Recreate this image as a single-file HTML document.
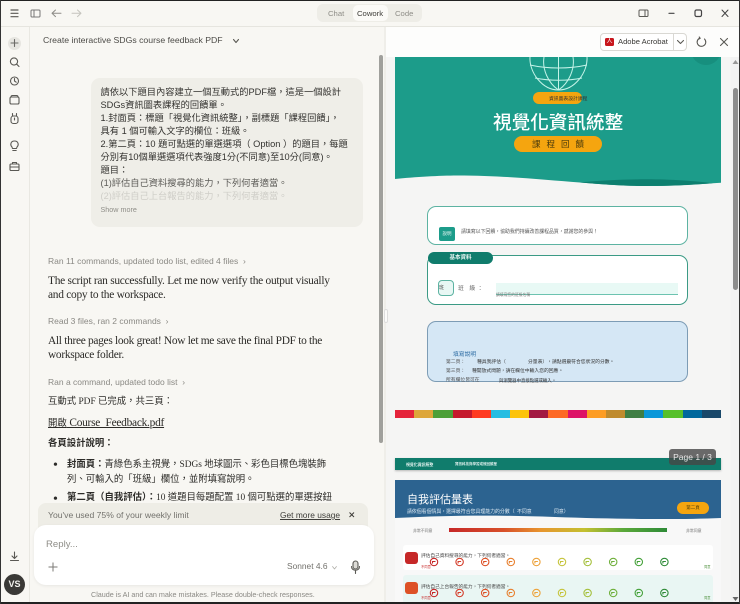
<!DOCTYPE html>
<html><head><meta charset="utf-8">
<style>
html,body{margin:0;padding:0;width:740px;height:604px;overflow:hidden;background:#f8f7f3}
*{box-sizing:border-box}
body{font-family:"Liberation Sans","Noto Sans CJK TC",sans-serif;position:relative}
#w{position:absolute;left:0;top:0;width:740px;height:604px;filter:blur(.3px)}
.a{position:absolute;white-space:nowrap}
.gr{color:#8a8984;font-size:8.500px}
.se{font-family:"Liberation Serif","Noto Sans CJK TC",serif;font-size:11.400px;letter-spacing:-.26px;color:#2c2b28;line-height:14px}
.cj{font-size:9.400px;letter-spacing:0}
svg{position:absolute;overflow:visible}
.ic{fill:none;stroke:#5a5954;stroke-width:1.100;stroke-linecap:round;stroke-linejoin:round}
.p{font-size:4.800px;color:#333;line-height:7px}
</style></head><body><div id="w">
<!-- frame -->
<div class="a" style="left:0;top:26px;width:740px;height:1px;background:#e6e5df"></div>
<div class="a" style="left:29px;top:27px;width:1px;height:577px;background:#e9e8e2"></div>
<!-- top bar icons -->
<svg style="left:0;top:0" width="130" height="27" class="ic"><path d="M11 10h7M11 13.300h7M11 16.700h7" stroke-width="1.200"/><rect x="31" y="10" width="9" height="7" rx="1" stroke="#777" stroke-width="1"/><path d="M34 10v7" stroke="#777" stroke-width="1"/><path d="M61 13.300H52M55.500 10l-3.500 3.300 3.500 3.300" stroke="#8d8c87" stroke-width="1"/><path d="M72 13.300h9M77.500 10l3.500 3.300-3.500 3.300" stroke="#c5c4be" stroke-width="1"/></svg>
<div class="a" style="left:317px;top:4px;width:105px;height:18px;background:#eeede7;border-radius:6px"></div>
<div class="a" style="left:353px;top:5px;width:35px;height:16px;background:#fbfaf7;border-radius:5px"></div>
<div class="a" style="left:328px;top:9px;font-size:7.700px;color:#8f8e88">Chat</div>
<div class="a" style="left:357px;top:9px;font-size:7.700px;color:#3d3c38">Cowork</div>
<div class="a" style="left:395px;top:9px;font-size:7.700px;color:#8f8e88">Code</div>
<svg style="left:630px;top:0" width="110" height="27" class="ic"><rect x="9" y="10" width="9" height="6.500" rx="1" stroke-width="1"/><path d="M15 10v6.500" stroke-width="1"/><path d="M39 13.300h5" stroke="#444" stroke-width="1.200"/><rect x="65" y="10" width="6.500" height="6.500" rx="1.500" stroke="#444" stroke-width="1.200"/><path d="M92 10l6 6.500M98 10l-6 6.500" stroke="#444" stroke-width="1"/></svg>
<!-- sidebar -->
<div class="a" style="left:8px;top:37px;width:13px;height:13px;background:#e6e5e0;border-radius:50%"></div>
<svg style="left:0;top:27px" width="30" height="150" class="ic"><path d="M14.500 12.500v7M11 16h7" stroke="#6b6a66"/><circle cx="14" cy="34.500" r="3.600"/><path d="M16.800 37.300l2.200 2.200"/><circle cx="14.500" cy="54" r="4"/><path d="M14.500 51.500V54l1.700 1.200"/><rect x="10" y="70" width="9" height="7" rx="1.400"/><path d="M11 70c0-1 .6-1.500 1.500-1.500h4c.9 0 1.500.5 1.500 1.500"/><rect x="11" y="89" width="7" height="7.500" rx="2.400"/><path d="M12.500 89v-2.500M16.500 89v-2.500M14.500 91v2"/><path d="M12 120c-2-2-1.500-6 2.500-6s4.500 4 2.500 6l-.5 1.500h-4zM12.800 123.500h3.400"/><rect x="10" y="137" width="9" height="6.500" rx="1"/><path d="M12.500 137v-1.500h4v1.500M10 140h9"/></svg>
<svg style="left:0;top:541px" width="30" height="30" class="ic"><path d="M14.500 11v6M12 15l2.500 2.500L17 15M10.500 19.500h8"/></svg>
<div class="a" style="left:4px;top:574px;width:21px;height:21px;background:#3a3936;border-radius:50%;color:#f3f2ee;font-size:9px;font-weight:bold;text-align:center;line-height:21px">VS</div>
<!-- title -->
<div class="a" style="left:43px;top:35px;font-size:8.700px;color:#4c4b47">Create interactive SDGs course feedback PDF</div>
<svg style="left:233px;top:39px" width="10" height="6" class="ic"><path d="M.5.500L3 3.500 5.500.500"/></svg>
<!-- bubble -->
<div class="a" style="left:91px;top:78px;width:272px;height:149px;background:#efeee8;border-radius:9px"></div>
<div class="a" style="left:100.500px;top:86px;font-size:9.250px;line-height:13px;color:#33322f">請依以下題目內容建立一個互動式的PDF檔，這是一個設計<br>SDGs資訊圖表課程的回饋單。<br>1.封面頁：標題「視覺化資訊統整」，副標題「課程回饋」，<br>具有 1 個可輸入文字的欄位：班級。<br>2.第二頁：10 題可點選的單選選項（ Option ）的題目，每題<br>分別有10個單選選項代表強度1分(不同意)至10分(同意)。<br>題目：<br><span style="color:#5d5c58">(1)評估自己資料搜尋的能力，下列何者適當。</span><br><span style="color:#cfcec8">(2)評估自己上台報告的能力，下列何者適當。</span></div>
<div class="a" style="left:100.500px;top:205px;font-size:7.200px;color:#8f8e88">Show more</div>
<!-- messages -->
<div class="a gr" style="left:48px;top:256px">Ran 11 commands, updated todo list, edited 4 files&nbsp; ›</div>
<div class="a se" style="left:48px;top:274px">The script ran successfully. Let me now verify the output visually<br>and copy to the workspace.</div>
<div class="a gr" style="left:48px;top:316px">Read 3 files, ran 2 commands&nbsp; ›</div>
<div class="a se" style="left:48px;top:334px;letter-spacing:-.3px">All three pages look great! Now let me save the final PDF to the<br>workspace folder.</div>
<div class="a gr" style="left:48px;top:377px">Ran a command, updated todo list&nbsp; ›</div>
<div class="a se cj" style="left:48px;top:395px">互動式 PDF 已完成，共三頁：</div>
<div class="a se" style="left:48px;top:416px;text-decoration:underline"><span class="cj">開啟</span> Course_Feedback.pdf</div>
<div class="a se cj" style="left:48px;top:437px;font-weight:bold">各頁設計說明：</div>
<div class="a se" style="left:53px;top:458px;line-height:15px;font-size:14px">•</div>
<div class="a se cj" style="left:67px;top:458px;line-height:15px"><b>封面頁：</b>青綠色系主視覺，SDGs 地球圖示、彩色目標色塊裝飾<br>列、可輸入的「班級」欄位，並附填寫說明。</div>
<div class="a se" style="left:53px;top:492px;line-height:15px;font-size:14px">•</div>
<div class="a se cj" style="left:67px;top:491px;line-height:15px"><b>第二頁（自我評估）：</b>10 道題目每題配置 10 個可點選的單選按鈕</div>
<!-- chat scrollbar -->
<div class="a" style="left:379px;top:55px;width:3.500px;height:388px;background:#a0a09c;border-radius:2px"></div>
<!-- limit -->
<div class="a" style="left:38px;top:503px;width:330px;height:30px;background:#eeede6;border-radius:8px 8px 0 0"></div>
<div class="a" style="left:48px;top:510px;font-size:8.600px;color:#73726d">You've used 75% of your weekly limit</div>
<div class="a" style="left:280px;top:510px;font-size:8.400px;color:#3e3d39;text-decoration:underline">Get more usage</div>
<svg style="left:349px;top:512px" width="6" height="6"><path d="M.5.500l4.500 4.500M5 .500L.5 5" stroke="#3e3d39" fill="none"/></svg>
<!-- input -->
<div class="a" style="left:34px;top:525px;width:340px;height:60px;background:#fff;border-radius:12px;box-shadow:0 1px 3px rgba(0,0,0,.07)"></div>
<div class="a" style="left:46px;top:539px;font-size:9.600px;color:#8f8e88">Reply...</div>
<svg style="left:48px;top:562px" width="12" height="12"><path d="M5 .5v9M.5 5h9" stroke="#7b7a75" fill="none"/></svg>
<div class="a" style="left:287px;top:561px;font-size:8.400px;color:#73726d">Sonnet 4.6</div>
<svg style="left:332px;top:566px" width="6" height="4" class="ic"><path d="M.5.500L2.500 3 4.500.500" stroke="#b0afa9" stroke-width=".8"/></svg>
<svg style="left:350px;top:561px" width="12" height="13" class="ic"><rect x="3" y="0" width="5" height="8" rx="2.500" fill="#dcdbd6"/><path d="M1.500 5.500c0 5 8 5 8 0M5.500 9.500v3"/></svg>
<div class="a" style="left:91px;top:590px;font-size:7.200px;color:#8a8984">Claude is AI and can make mistakes. Please double-check responses.</div>
<!-- right panel -->
<div class="a" style="left:386px;top:27px;width:354px;height:30px;background:#fdfdfc"></div>
<div class="a" style="left:384px;top:27px;width:2px;height:577px;background:#efeee9"></div>
<div class="a" style="left:386px;top:57px;width:354px;height:547px;background:#f5f5f4;overflow:hidden">
 <div class="a" style="left:9px;top:0;width:326px;height:135px;background:#1c9c8a"></div>
 <div class="a" style="left:305px;top:-22px;width:30px;height:30px;background:#178f7e;border-radius:50%"></div>
 <svg style="left:9px;top:100px" width="326" height="40"><path d="M0 22C20 20 45 18.500 62 18.500C110 18.500 150 23 185 25.500C210 27.500 230 29 252 29C280 29 305 27 326 25.700V40H0Z" fill="#f5f5f4"/><path d="M185 25.500C210 23 235 22.300 252 22.300C275 22.300 300 24 318 26.300C300 27.800 280 29 252 29C230 29 210 27.500 185 25.500Z" fill="#0d7f6f"/></svg>
 <svg style="left:9px;top:0" width="326" height="40" fill="none" stroke="#c4f3e8" stroke-width="1"><path d="M135 0c-1 15 12 33 28.500 33s29.500-18 28.500-33"/><path d="M135 8c18 4 39 4 57 0M140 21c15 3 33 3 47 0"/><path d="M163.500 0v33M149 0c-2 12 4 26 14.500 33M178 0c2 12-4 26-14.500 33"/></svg>
 <div class="a" style="left:147px;top:35px;width:49px;height:12px;background:#f5a50f;border-radius:6px"></div>
 <div class="a" style="left:163px;top:38px;font-size:4.800px;color:#333">資訊圖表設計課程</div>
 <div class="a" style="left:107px;top:54px;font-size:18.600px;line-height:24px;color:#fff;font-weight:500">視覺化資訊統整</div>
 <div class="a" style="left:128px;top:79px;width:88px;height:16px;background:#f5a50f;border-radius:8px;text-align:center;font-size:8.500px;line-height:16px;letter-spacing:6px;text-indent:6px;color:#4a3b0c">課程回饋</div>
 <!-- card 1 -->
 <div class="a" style="left:41px;top:149px;width:261px;height:39px;background:#fff;border:1px solid #5db3a2;border-radius:9px"></div>
 <div class="a" style="left:53px;top:170px;width:16px;height:14px;background:#1c9c8a;border-radius:2px;color:#e6f5f2;font-size:4.500px;text-align:center;line-height:14px">說明</div>
 <div class="a" style="left:75px;top:171px;font-size:4.900px;color:#555">請填寫以下回饋，協助我們持續改善課程品質，感謝您的參與！</div>
 <!-- card 2 -->
 <div class="a" style="left:41px;top:198px;width:261px;height:50px;background:#fff;border:1px solid #3b9a85;border-radius:9px"></div>
 <div class="a" style="left:42px;top:195px;width:65px;height:12px;background:#107c6c;border-radius:6px;color:#e8f5f2;font-size:5.500px;font-weight:bold;text-align:center;line-height:12px">基本資料</div>
 <div class="a" style="left:52px;top:223px;width:16px;height:16px;background:#e8f7f4;border:1px solid #5db3a2;border-radius:4px;font-size:5px;line-height:14px;color:#555">班</div>
 <div class="a" style="left:72px;top:226px;font-size:5.800px;color:#666;letter-spacing:2px">班 級：</div>
 <div class="a" style="left:110px;top:226px;width:182px;height:12px;background:#e8f9f5;border-bottom:1.500px solid #6cc3b0"></div>
 <div class="a" style="left:110px;top:236px;font-size:3.800px;color:#777">請填寫您的班級名稱</div>
 <!-- card 3 -->
 <div class="a" style="left:41px;top:264px;width:261px;height:61px;background:#d5e7f5;border:1px solid #7d9cb5;border-radius:9px"></div>
 <div class="a" style="left:67px;top:292px;font-size:5.800px;color:#2e6da4">填寫說明</div>
 <div class="a p" style="left:60px;top:302px;color:#555">第二頁：</div><div class="a p" style="left:91px;top:302px">種具我評估（</div><div class="a p" style="left:142px;top:302px">分量表），請點選最符合您狀況的分數。</div>
 <div class="a p" style="left:60px;top:311px;color:#555">第三頁：</div><div class="a p" style="left:86px;top:311px">種開放式問題，請在欄位中輸入您的回應。</div>
 <div class="a p" style="left:60px;top:320px;color:#555">所有欄位皆可在</div><div class="a p" style="left:113px;top:320px;font-size:4.400px">與瀏覽器中直接點選或輸入。</div>
 <!-- sdg strip -->
 <div class="a" style="left:9px;top:353px;width:326px;height:8px;display:flex">
 <i style="flex:1;background:#e5243b"></i><i style="flex:1;background:#dda63a"></i><i style="flex:1;background:#4c9f38"></i><i style="flex:1;background:#c5192d"></i><i style="flex:1;background:#ff3a21"></i><i style="flex:1;background:#26bde2"></i><i style="flex:1;background:#fcc30b"></i><i style="flex:1;background:#a21942"></i><i style="flex:1;background:#fd6925"></i><i style="flex:1;background:#dd1367"></i><i style="flex:1;background:#fd9d24"></i><i style="flex:1;background:#bf8b2e"></i><i style="flex:1;background:#3f7e44"></i><i style="flex:1;background:#0a97d9"></i><i style="flex:1;background:#56c02b"></i><i style="flex:1;background:#00689d"></i><i style="flex:1;background:#19486a"></i></div>
 <!-- footer -->
 <div class="a" style="left:9px;top:401px;width:326px;height:12px;background:#107c6c;box-shadow:0 1px 2px rgba(0,0,0,.25)"></div>
 <div class="a" style="left:20px;top:405px;font-size:3.900px;color:#e4f3f0;font-weight:bold">視覺化資訊統整</div>
 <div class="a" style="left:69px;top:405px;font-size:3.500px;color:#e4f3f0;font-weight:bold">資訊科技與學習成效回饋單</div>
 <!-- page 2 -->
 <div class="a" style="left:9px;top:423px;width:326px;height:124px;background:#f8f8f8"></div>
 <div class="a" style="left:9px;top:423px;width:326px;height:39px;background:#2c6390"></div>
 <svg style="left:9px;top:455px" width="326" height="9"><path d="M0 6C60 3 100 3 160 5C220 7 280 8 326 6V9H0Z" fill="#f8f8f8"/></svg>
 <div class="a" style="left:21px;top:436px;font-size:11px;line-height:15px;color:#fff">自我評估量表</div>
 <div class="a" style="left:21px;top:451px;font-size:4.900px;color:#dce8f2">請依個看個情與，選擇最符合您具理能力的分數（</div>
 <div class="a" style="left:131px;top:451px;font-size:4.900px;color:#dce8f2">不同意</div>
 <div class="a" style="left:168px;top:451px;font-size:4.900px;color:#dce8f2">同意）</div>
 <div class="a" style="left:291px;top:445px;width:32px;height:12px;background:#f5a50f;border-radius:6px;font-size:4.500px;text-align:center;line-height:12px;color:#4a3b0c">第二頁</div>
 <div class="a" style="left:27px;top:471px;font-size:3.900px;color:#777">非常不同意</div>
 <div class="a" style="left:63px;top:471px;width:218px;height:3.500px;background:linear-gradient(90deg,#c62828,#d84f2a 25%,#e8952f 42%,#c4c030 62%,#5aa83a 80%,#2e8b37)"></div>
 <div class="a" style="left:300px;top:471px;font-size:3.900px;color:#777">非常同意</div>
 <!-- q1 -->
 <div class="a" style="left:17px;top:488px;width:310px;height:25px;background:#fff;border-radius:3px"></div>
 <div class="a" style="left:19px;top:495px;width:13px;height:12px;background:#c62828;border-radius:3px"></div>
 <div class="a" style="left:35px;top:496px;font-size:4.700px;color:#444">評估自己資料搜尋的能力，下列何者適當。</div>
 <div class="a" style="left:35px;top:506.500px;font-size:3.300px;color:#c62828">不同意</div>
 <div class="a" style="left:318px;top:506.500px;font-size:3.300px;color:#4b8f3a">同意</div>
 <!-- q2 -->
 <div class="a" style="left:17px;top:518px;width:310px;height:29px;background:#e9f6f3;border-radius:3px"></div>
 <div class="a" style="left:19px;top:525px;width:13px;height:12px;background:#dd5126;border-radius:3px"></div>
 <div class="a" style="left:35px;top:527px;font-size:4.700px;color:#444">評估自己上台報告的能力，下列何者適當。</div>
 <div class="a" style="left:35px;top:537.500px;font-size:3.300px;color:#c62828">不同意</div>
 <div class="a" style="left:318px;top:537.500px;font-size:3.300px;color:#4b8f3a">同意</div>
 <svg style="left:0;top:0" width="354" height="547" fill="none" stroke-width="1.100">
  <g transform="translate(0,505)">
  <g transform="translate(48,0)" stroke="#c62828"><circle r="3.700"/><path d="M-1.500 1.500v-2h3"/></g><g transform="translate(73.600,0)" stroke="#d43d2a"><circle r="3.700"/><path d="M-1.500 1.500v-2h3"/></g><g transform="translate(99.200,0)" stroke="#dd5126"><circle r="3.700"/><path d="M-1.500 1.500v-2h3"/></g><g transform="translate(124.800,0)" stroke="#e8802f"><circle r="3.700"/><path d="M-1.500 1.500v-2h3"/></g><g transform="translate(150.400,0)" stroke="#eda23a"><circle r="3.700"/><path d="M-1.500 1.500v-2h3"/></g><g transform="translate(176,0)" stroke="#c6c43c"><circle r="3.700"/><path d="M-1.500 1.500v-2h3"/></g><g transform="translate(201.600,0)" stroke="#a5c03c"><circle r="3.700"/><path d="M-1.500 1.500v-2h3"/></g><g transform="translate(227.200,0)" stroke="#6eaf3a"><circle r="3.700"/><path d="M-1.500 1.500v-2h3"/></g><g transform="translate(252.800,0)" stroke="#45a13a"><circle r="3.700"/><path d="M-1.500 1.500v-2h3"/></g><g transform="translate(278.400,0)" stroke="#2e8b37"><circle r="3.700"/><path d="M-1.500 1.500v-2h3"/></g>
  </g>
  <g transform="translate(0,536)">
  <g transform="translate(48,0)" stroke="#c62828"><circle r="3.700"/><path d="M-1.500 1.500v-2h3"/></g><g transform="translate(73.600,0)" stroke="#d43d2a"><circle r="3.700"/><path d="M-1.500 1.500v-2h3"/></g><g transform="translate(99.200,0)" stroke="#dd5126"><circle r="3.700"/><path d="M-1.500 1.500v-2h3"/></g><g transform="translate(124.800,0)" stroke="#e8802f"><circle r="3.700"/><path d="M-1.500 1.500v-2h3"/></g><g transform="translate(150.400,0)" stroke="#eda23a"><circle r="3.700"/><path d="M-1.500 1.500v-2h3"/></g><g transform="translate(176,0)" stroke="#c6c43c"><circle r="3.700"/><path d="M-1.500 1.500v-2h3"/></g><g transform="translate(201.600,0)" stroke="#a5c03c"><circle r="3.700"/><path d="M-1.500 1.500v-2h3"/></g><g transform="translate(227.200,0)" stroke="#6eaf3a"><circle r="3.700"/><path d="M-1.500 1.500v-2h3"/></g><g transform="translate(252.800,0)" stroke="#45a13a"><circle r="3.700"/><path d="M-1.500 1.500v-2h3"/></g><g transform="translate(278.400,0)" stroke="#2e8b37"><circle r="3.700"/><path d="M-1.500 1.500v-2h3"/></g>
  </g>
 </svg>
 <!-- page badge -->
 <div class="a" style="left:283px;top:392px;width:47px;height:16px;background:rgba(70,70,70,.8);border-radius:3px;color:#e8e8e8;font-size:8.500px;line-height:16px;text-align:center">Page 1 / 3</div>
 <!-- pdf scrollbar -->
 <div class="a" style="left:345px;top:0;width:9px;height:547px;background:#f3f3f3"></div>
 <div class="a" style="left:347px;top:31px;width:4.500px;height:202px;background:#8d8d8d;border-radius:3px"></div>
 <svg style="left:346px;top:3px" width="7" height="5"><path d="M3.500 0L6.500 4H.5Z" fill="#999"/></svg>
 <svg style="left:346px;top:540px" width="7" height="5"><path d="M.5 0H6.500L3.500 4Z" fill="#666"/></svg>
</div>
<div class="a" style="left:383.500px;top:309px;width:4px;height:14px;background:#fbfbfa;border:1px solid #ddd;border-radius:2px"></div>
<!-- acrobat btn -->
<div class="a" style="left:600px;top:33px;width:87px;height:18px;background:#fff;border:1px solid #d9d8d3;border-radius:4px"></div>
<div class="a" style="left:673px;top:33px;width:1px;height:18px;background:#d9d8d3"></div>
<div class="a" style="left:605px;top:38px;width:9px;height:8px;background:#c8161d;border-radius:1.500px;color:#fff;font-size:6px;line-height:8px;text-align:center">人</div>
<div class="a" style="left:618px;top:37px;font-size:7.600px;color:#3a3936">Adobe Acrobat</div>
<svg style="left:677px;top:40px" width="8" height="5" class="ic"><path d="M.5.500L3.500 3.500 6.500.500"/></svg>
<svg style="left:696px;top:37px" width="11" height="11" class="ic"><path d="M8.500 2a4.300 4.300 0 1 1-4.500-1M3.200 0l1 1.300-1.500.9"/></svg>
<svg style="left:720px;top:38px" width="9" height="9" class="ic"><path d="M.5.500l7 7M7.500.500l-7 7"/></svg>
</div>
<!-- window border -->
<div class="a" style="left:0;top:0;width:740px;height:1px;background:#222"></div>
<div class="a" style="left:0;top:602px;width:740px;height:2px;background:#222"></div>
<div class="a" style="left:0;top:0;width:1px;height:604px;background:#333"></div>
<div class="a" style="left:739px;top:0;width:1px;height:604px;background:#333"></div>
</body></html>
